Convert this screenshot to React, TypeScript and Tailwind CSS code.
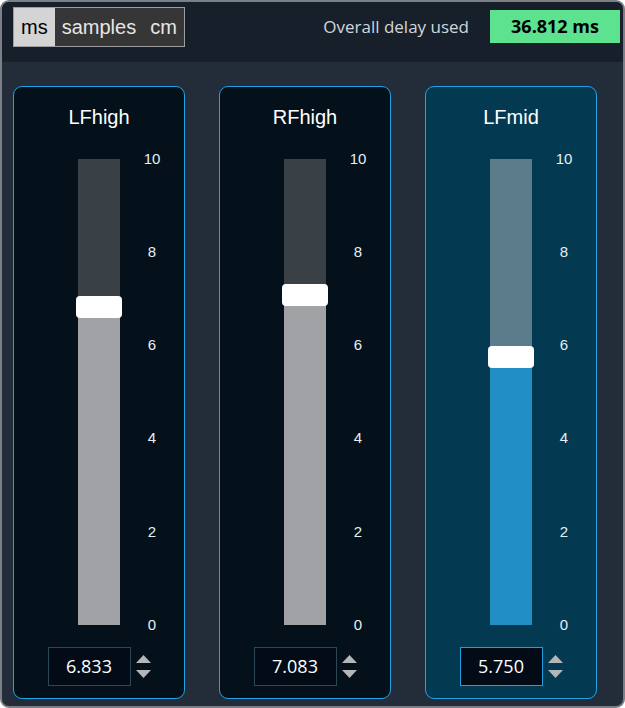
import { useState } from 'react'

type Channel = {
	name: string
	value: number
	active?: boolean
}

const channels: Channel[] = [
	{ name: 'LFhigh', value: 6.833 },
	{ name: 'RFhigh', value: 7.083 },
	{ name: 'LFmid', value: 5.75, active: true },
]

const ticks = ['10', '8', '6', '4', '2', '0']

function Spinner() {
	return (
		<div className="flex flex-col gap-[7px] ml-[5px]">
			<svg width="15" height="8" viewBox="0 0 15 8">
				<polygon points="7.5,0 15,8 0,8" fill="#b4b6b8" />
			</svg>
			<svg width="15" height="8" viewBox="0 0 15 8">
				<polygon points="0,0 15,0 7.5,8" fill="#b4b6b8" />
			</svg>
		</div>
	)
}

function ChannelPanel({ channel }: { channel: Channel }) {
	const pct = channel.value / 10
	const active = channel.active

	return (
		<div
			className={`w-[172px] h-[613px] rounded-[9px] border border-[#1fa3e6] flex flex-col items-center ${
				active ? 'bg-[#033a52]' : 'bg-[#04111b]'
			}`}
		>
			<div className="mt-[18px] h-[24px] text-[20px] leading-[24px] text-white font-['Liberation_Sans',Arial,sans-serif]">
				{channel.name}
			</div>

			<div className="mt-[30px] relative w-[42px] h-[466px]">
				<div className={`w-full h-full flex flex-col ${active ? 'bg-[#5b7d8b]' : 'bg-[#394046]'}`}>
					<div className="flex-1" />
					<div
						className={active ? 'bg-[#218fc6]' : 'bg-[#a0a2a5]'}
						style={{ height: `${pct * 100}%` }}
					/>
				</div>
				<div
					className="absolute left-[-2px] w-[46px] h-[22px] rounded-[4px] bg-white"
					style={{ top: `${(1 - pct) * 466 - 11}px` }}
				/>
				<div className="absolute left-[74px] top-0 h-full flex flex-col justify-between">
					{ticks.map((t) => (
						<div key={t} className="h-0 flex items-center justify-center w-[0px]">
							<span className="text-[15px] text-[#e8eef3] font-['Liberation_Sans',Arial,sans-serif]">{t}</span>
						</div>
					))}
				</div>
			</div>

			<div className="mt-[22px] flex items-center">
				<div
					className={`w-[83px] h-[39px] border flex items-center justify-center bg-[#020b16] text-[18px] text-white font-['Open_Sans','Noto_Sans',sans-serif] ${
						active ? 'border-[#1f9fdf]' : 'border-[#2b4856]'
					}`}
				>
					{channel.value.toFixed(3)}
				</div>
				<Spinner />
			</div>
		</div>
	)
}

function App() {
	const [unit, setUnit] = useState('ms')

	return (
		<div className="w-[625px] h-[708px] bg-white">
			<div className="w-full h-full rounded-[9px] border-2 border-[#7b8087] bg-[#232d39] flex flex-col overflow-hidden">
				<div className="h-[60px] bg-[#17202a] flex items-start px-[11px]">
					<div className="mt-[5px] h-[40px] border border-[#9a9ea3] flex font-['Liberation_Sans',Arial,sans-serif] text-[20px]">
						{['ms', 'samples', 'cm'].map((u) => (
							<button
								key={u}
								type="button"
								onClick={() => setUnit(u)}
								className={`px-[7px] h-full flex items-center ${
									unit === u ? 'bg-[#d4d4d4] text-black' : 'bg-[#363636] text-[#e6e6e6]'
								}`}
							>
								{u}
							</button>
						))}
					</div>
					<div className="flex-1" />
					<div className="mt-[12px] text-[17px] text-[#d0d6dc] font-['Open_Sans','Noto_Sans',sans-serif] mr-[21px]">
						Overall delay used
					</div>
					<div className="mt-[8px] mr-[-8px] w-[130px] h-[33px] bg-[#5de28f] flex items-center justify-center text-[18px] font-bold text-black font-['Open_Sans','Noto_Sans',sans-serif]">
						36.812 ms
					</div>
				</div>

				<div className="flex gap-[34px] px-[11px] pt-[24px]">
					{channels.map((c) => (
						<ChannelPanel key={c.name} channel={c} />
					))}
				</div>
			</div>
		</div>
	)
}

export default App
